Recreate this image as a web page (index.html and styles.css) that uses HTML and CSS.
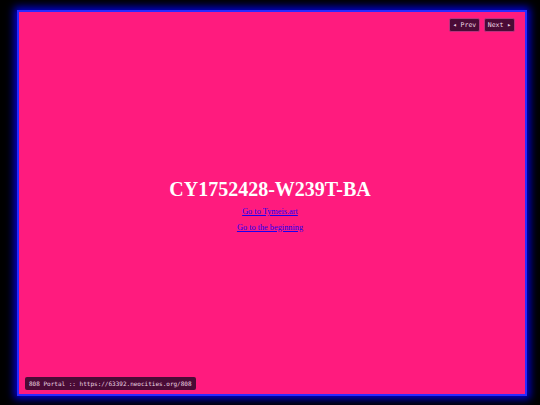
FILE: index.html
```html
<!DOCTYPE html>
<html>
<head>
<meta charset="utf-8">
<link rel="stylesheet" href="styles.css">
</head>
<body>
<div class="frame">
  <div class="nav">
    <a class="btn" href="#">◂ Prev</a>
    <a class="btn" href="#">Next ▸</a>
  </div>
  <div class="center">
    <h1 class="title">CY1752428-W239T-BA</h1>
    <p class="link"><a href="#">Go to Tymeis.art</a></p>
    <p class="link"><a href="#">Go to the beginning</a></p>
  </div>
  <div class="foot">
    <span class="portal">808 Portal :: https://63392.neocities.org/808</span>
  </div>
</div>
</body>
</html>
```
FILE: styles.css
```css
html, body {
  margin: 0;
  height: 100%;
  background: #000;
}
body {
  box-sizing: border-box;
  padding: 10px 13px 9px 17px;
}
.frame {
  box-sizing: border-box;
  height: 100%;
  background: #ff1b7e;
  border: 2px solid #2a2aff;
  box-shadow: 0 0 8px 3px #0000d8;
  display: flex;
  flex-direction: column;
  padding: 6px 10px 4px 6px;
}
.nav {
  display: flex;
  justify-content: flex-end;
  gap: 4px;
}
.btn {
  display: block;
  box-sizing: border-box;
  width: 31px;
  height: 14px;
  line-height: 12px;
  text-align: center;
  background: #4a0b36;
  border: 1px solid #b8327e;
  border-radius: 2px;
  color: #f2dce8;
  font-family: "DejaVu Sans Mono", monospace;
  font-size: 6.5px;
  text-decoration: none;
}
.center {
  flex: 1;
  display: flex;
  flex-direction: column;
  align-items: center;
  justify-content: center;
  padding-top: 7px;
  font-family: "Liberation Serif", serif;
}
.title {
  margin: 0 0 6px;
  font-size: 20px;
  font-weight: bold;
  color: #fff;
  line-height: 23px;
}
.link {
  margin: 0 0 7px;
  font-size: 8.3px;
  line-height: 9px;
}
.link a {
  color: #1a00ee;
}
.foot {
  display: flex;
}
.portal {
  display: block;
  box-sizing: border-box;
  height: 13px;
  line-height: 13px;
  padding: 0 4px;
  background: #4a0b36;
  border-radius: 2px;
  color: #ecd6e2;
  font-family: "DejaVu Sans Mono", monospace;
  font-size: 6px;
  white-space: nowrap;
}
```
